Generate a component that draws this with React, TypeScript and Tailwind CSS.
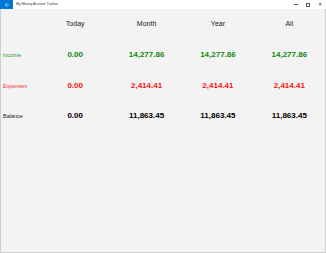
import { ArrowLeft } from 'lucide-react';

const cols = ['Today', 'Month', 'Year', 'All'];

const rows = [
  { label: 'Income', labelColor: 'text-[#2a9a2a]', color: 'text-[#0a8a0a]', values: ['0.00', '14,277.86', '14,277.86', '14,277.86'] },
  { label: 'Expenses', labelColor: 'text-[#f0323c]', color: 'text-[#ff1010]', values: ['0.00', '2,414.41', '2,414.41', '2,414.41'] },
  { label: 'Balance', labelColor: 'text-[#222222]', color: 'text-black', values: ['0.00', '11,863.45', '11,863.45', '11,863.45'] },
];

export default function App() {
  return (
    <div className="w-[326px] h-[253px] flex flex-col bg-white font-['Liberation_Sans',sans-serif] overflow-hidden">
      {/* Title bar */}
      <div className="h-[9px] flex items-center bg-white">
        <div className="w-[13px] h-[9px] bg-[#0078d7] flex items-center justify-center">
          <ArrowLeft className="w-[6px] h-[6px] text-white" strokeWidth={2} />
        </div>
        <span className="ml-[3px] text-[3.5px] leading-none text-[#333]">My Money Account Tracker</span>
        <div className="ml-auto flex items-center h-full">
          <span className="w-[12px] flex justify-center">
            <span className="block w-[4px] h-px bg-[#555]" />
          </span>
          <span className="w-[12px] flex justify-center">
            <span className="block w-[4px] h-[4px] border border-[#555]" />
          </span>
          <span className="w-[12px] flex justify-center text-[5px] leading-none text-[#333]">✕</span>
        </div>
      </div>

      {/* Content */}
      <div className="flex-1 bg-[#f3f3f3] border-x border-b border-[#cfcfcf]">
        <div className="grid grid-cols-[38.5px_repeat(4,1fr)] grid-rows-[31px_30.5px_30.5px_30.5px]">
          <div />
          {cols.map((c) => (
            <div key={c} className="flex items-center justify-center text-[7px] text-[#222]">
              {c}
            </div>
          ))}
          {rows.map((r) => (
            <div key={r.label} className="contents">
              <div className={`flex items-center pl-[2px] text-[5.5px] ${r.labelColor}`}>{r.label}</div>
              {r.values.map((v, i) => (
                <div key={i} className={`flex items-center justify-center text-[8px] font-bold ${r.color}`}>
                  {v}
                </div>
              ))}
            </div>
          ))}
        </div>
      </div>
    </div>
  );
}
